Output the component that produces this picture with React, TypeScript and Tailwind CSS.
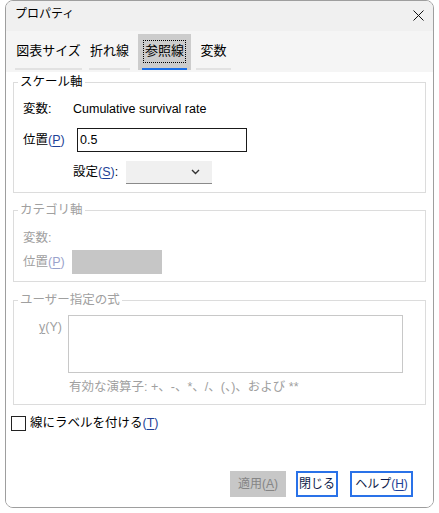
import React from 'react';

const font = { fontFamily: '"Liberation Sans", "Noto Sans CJK JP", sans-serif' };

const Key: React.FC<{ k: string; dim?: boolean }> = ({ k, dim }) => (
  <span className={dim ? 'text-[#9aa3cc]' : 'text-[#1d3f96]'}>
    (<span className="underline underline-offset-2">{k}</span>)
  </span>
);

const Tab: React.FC<{ label: string; w: string; selected?: boolean; mr?: string }> = ({ label, w, selected, mr }) => (
  <div className={`${w} ${mr ?? ''} h-[36px] flex flex-col ${selected ? 'bg-[#cccccc]' : ''}`}>
    <div className="flex-1 flex items-center justify-center text-[13px] text-black">
      {selected ? (
        <span className="border border-dotted border-black px-[1px] h-[23px] flex items-center">{label}</span>
      ) : (
        label
      )}
    </div>
    {selected ? (
      <div className="h-[2px] mx-[4px] bg-[#1a6fe8]" />
    ) : (
      <div className="h-[2px] bg-[#e2e2e2]" />
    )}
  </div>
);

export default function App() {
  return (
    <div className="w-[439px] h-[513px] bg-white text-[12.5px] text-black" style={font}>
      <div className="ml-[5px] w-[429px] h-[508px] border border-[#9e9e9e] rounded-[8px] overflow-hidden flex flex-col">
        {/* title bar */}
        <div className="h-[30px] bg-[#f0f0f0] flex items-start justify-between pl-[9px] pr-[9px] pt-[5px]">
          <span className="text-[12px] leading-[16px]">プロパティ</span>
          <svg width="11" height="11" viewBox="0 0 11 11" className="mt-[4px]">
            <path d="M0.5 0.5 L10.5 10.5 M10.5 0.5 L0.5 10.5" stroke="#111" strokeWidth="1" fill="none" />
          </svg>
        </div>

        {/* tabs */}
        <div className="h-[41px] bg-[#f5f5f5] flex items-start pl-[9px] pt-[3px]">
          <Tab label="図表サイズ" w="w-[67px]" mr="mr-[7px]" />
          <Tab label="折れ線" w="w-[41px]" mr="mr-[8px]" />
          <Tab label="参照線" w="w-[53px]" mr="mr-[5px]" selected />
          <Tab label="変数" w="w-[35px]" />
        </div>

        {/* content */}
        <div className="flex-1 flex flex-col bg-white">
          {/* スケール軸 */}
          <fieldset className="mx-[7px] mt-[2px] h-[119px] border border-[#dcdcdc]">
            <legend className="ml-[4px] px-[2px] leading-[16px]">スケール軸</legend>
            <div className="pl-[9px]">
              <div className="mt-[9px] h-[20px] flex items-center">
                <span className="w-[50px]">変数:</span>
                <span>Cumulative survival rate</span>
              </div>
              <div className="mt-[9px] h-[24px] flex items-center">
                <span className="w-[54px]">位置<Key k="P" /></span>
                <div className="w-[170px] h-[24px] border border-[#1a1a1a] pl-[2px] flex items-center">0.5</div>
              </div>
              <div className="mt-[9px] h-[23px] flex items-center pl-[50px]">
                <span className="w-[53px]">設定<Key k="S" />:</span>
                <div className="w-[86px] h-[23px] bg-[#f0f0f0] border-b border-[#8a8a8a] flex items-center justify-end pr-[12px]">
                  <svg width="9" height="6" viewBox="0 0 9 6">
                    <path d="M1 1 L4.5 4.5 L8 1" stroke="#333" strokeWidth="1.4" fill="none" />
                  </svg>
                </div>
              </div>
            </div>
          </fieldset>

          {/* カテゴリ軸 */}
          <fieldset className="mx-[7px] mt-[9px] h-[80px] border border-[#dcdcdc] text-[#a0a0a0]">
            <legend className="ml-[4px] px-[2px] leading-[16px]">カテゴリ軸</legend>
            <div className="pl-[9px]">
              <div className="mt-[10px] h-[20px] flex items-center">変数:</div>
              <div className="mt-[2px] h-[24px] flex items-center">
                <span className="w-[49px]">位置<Key k="P" dim /></span>
                <div className="w-[90px] h-[24px] bg-[#c6c6c6]" />
              </div>
            </div>
          </fieldset>

          {/* ユーザー指定の式 */}
          <fieldset className="mx-[7px] mt-[10px] h-[113px] border border-[#dcdcdc] text-[#a0a0a0]">
            <legend className="ml-[4px] px-[2px] leading-[16px]">ユーザー指定の式</legend>
            <div className="mt-[7px] flex items-start">
              <span className="w-[48px] mt-[4px] text-right leading-[16px]">
                <span className="underline underline-offset-2">y</span>(Y)
              </span>
              <div className="ml-[6px] w-[335px] h-[58px] border border-[#c8c8c8]" />
            </div>
            <div className="mt-[6px] ml-[55px] leading-[16px]">有効な演算子: +、-、*、/、(、)、および **</div>
          </fieldset>

          {/* checkbox */}
          <div className="mt-[10px] ml-[5px] h-[16px] flex items-center gap-[4px]">
            <div className="w-[15px] h-[15px] border border-[#222]" />
            <span>線にラベルを付ける<Key k="T" /></span>
          </div>

          {/* buttons */}
          <div className="mt-[40px] h-[26px] flex justify-end pr-[20px] text-[12px]">
            <div className="w-[56px] h-[26px] bg-[#c7c7c7] text-[#858585] flex items-center justify-center">
              適用(<span className="underline underline-offset-2">A</span>)
            </div>
            <div className="ml-[10px] w-[42px] h-[26px] border-2 border-[#2a72e8] text-[#0d1a4a] flex items-center justify-center">
              閉じる
            </div>
            <div className="ml-[12px] w-[63px] h-[26px] border-2 border-[#2a72e8] text-[#0d1a4a] flex items-center justify-center">
              ヘルプ<Key k="H" />
            </div>
          </div>
        </div>
      </div>
    </div>
  );
}
